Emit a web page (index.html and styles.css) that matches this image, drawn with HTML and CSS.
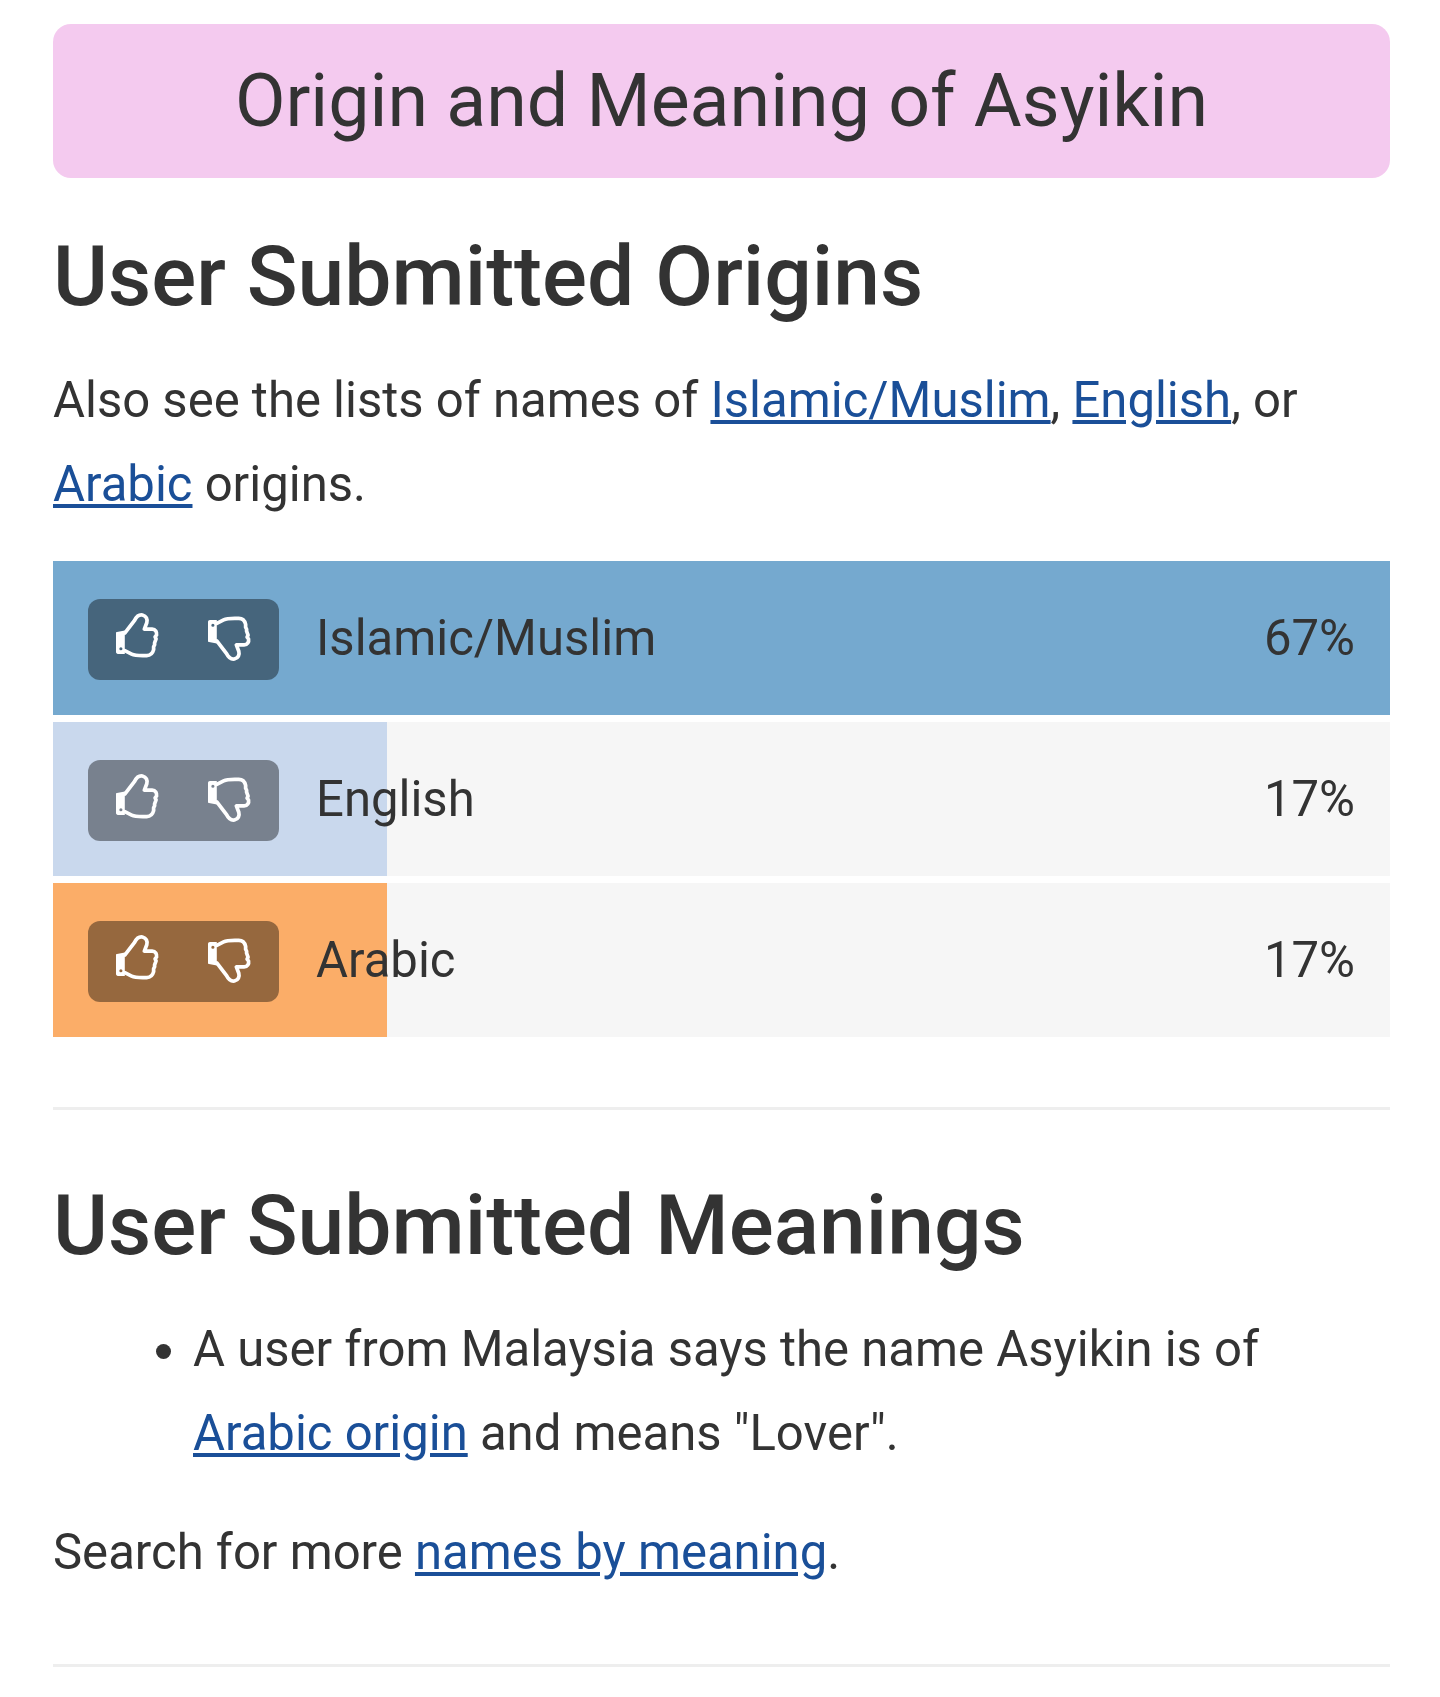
FILE: index.html
```html
<!DOCTYPE html>
<html lang="en">
<head>
    <meta charset="UTF-8">
    <meta name="viewport" content="width=device-width, initial-scale=1.0">
    <title>Origin and Meaning of Asyikin</title>
    <link rel="stylesheet" href="styles.css">
</head>
<body>
    <svg class="defs" width="0" height="0">
        <symbol id="thumb" viewBox="0 0 44 46">
            <path class="thumb-line" d="M9 21 L19 8 C21 4 24 2 27 2.5 C31 3.5 32.5 7 31.5 10.5 L29 17 H37 C40.5 17 42 20 41.5 23 L40 25 L41 27 L39.5 31 L39.5 33 L38.5 35 L38.5 38 C37.5 42 35 44 31.5 44 C26 44 20 44.5 16 42.5 L9 39"/>
            <path class="thumb-cuff" fill-rule="evenodd" d="M1 20 L9 18.5 V42.5 L2 42.5 C0.8 42.5 0 41.5 0 40.5 V21 C0 20.5 0.4 20 1 20 Z M5 35.5 A1.6 1.6 0 1 0 5 38.7 A1.6 1.6 0 1 0 5 35.5 Z"/>
        </symbol>
    </svg>

    <h1 class="title-box">Origin and Meaning of Asyikin</h1>

    <h2 class="heading-origins">User Submitted Origins</h2>
    <p>Also see the lists of names of <a href="#">Islamic/Muslim</a>, <a href="#">English</a>, or <a href="#">Arabic</a> origins.</p>

    <div class="votes">
        <div class="vote-row">
            <div class="vote-fill fill-blue" style="width: 100%"></div>
            <div class="vote-btns">
                <svg class="thumb"><use href="#thumb"/></svg>
                <svg class="thumb thumb-down"><use href="#thumb"/></svg>
            </div>
            <span class="vote-name">Islamic/Muslim</span>
            <span class="vote-pct">67%</span>
        </div>
        <div class="vote-row">
            <div class="vote-fill fill-light" style="width: 25%"></div>
            <div class="vote-btns">
                <svg class="thumb"><use href="#thumb"/></svg>
                <svg class="thumb thumb-down"><use href="#thumb"/></svg>
            </div>
            <span class="vote-name">English</span>
            <span class="vote-pct">17%</span>
        </div>
        <div class="vote-row">
            <div class="vote-fill fill-orange" style="width: 25%"></div>
            <div class="vote-btns">
                <svg class="thumb"><use href="#thumb"/></svg>
                <svg class="thumb thumb-down"><use href="#thumb"/></svg>
            </div>
            <span class="vote-name">Arabic</span>
            <span class="vote-pct">17%</span>
        </div>
    </div>

    <hr class="rule-first">

    <h2 class="heading-meanings">User Submitted Meanings</h2>
    <ul>
        <li>A user from Malaysia says the name Asyikin is of <a href="#">Arabic origin</a> and means "Lover".</li>
    </ul>
    <p class="search-more">Search for more <a href="#">names by meaning</a>.</p>

    <hr class="rule-last">
</body>
</html>
```

FILE: styles.css
```css
*{
    box-sizing: border-box;
}
body{
    margin: 0;
    padding: 24px 50px 0 53px;
    background: #fff;
    color: #333;
    font-family: Roboto, "Liberation Sans", sans-serif;
    font-size: 49.05px;
    line-height: 84px;
}
.defs{
    position: absolute;
}
a{
    color: #1a4f98;
}
.title-box{
    margin: 0;
    height: 154px;
    border-radius: 18px;
    background: #f4caef;
    font-size: 73.5px;
    font-weight: 400;
    line-height: 154px;
    text-align: center;
}
h2{
    margin: 0;
    font-size: 84px;
    font-weight: 500;
    line-height: 96px;
}
.heading-origins{
    margin-top: 51px;
}
.heading-meanings{
    margin-top: 68px;
}
h2 + p{
    margin-top: 33px;
}
p{
    margin: 0;
}
.votes{
    margin-top: 35px;
    display: flex;
    flex-direction: column;
    gap: 7px;
}
.vote-row{
    position: relative;
    height: 154px;
    background: #f6f6f6;
    padding: 0 35px 0 35px;
    display: flex;
    align-items: center;
}
.vote-fill{
    position: absolute;
    left: 0;
    top: 0;
    bottom: 0;
}
.fill-blue{
    background: #75a9cf;
}
.fill-light{
    background: #c9d8ed;
}
.fill-orange{
    background: #fbad68;
}
.vote-btns{
    position: relative;
    width: 191px;
    height: 81px;
    margin-top: 3px;
    border-radius: 12px;
    background: rgba(0, 0, 0, 0.4);
    padding: 13px 28px 0 28px;
    display: flex;
    justify-content: space-between;
    align-items: flex-start;
}
.thumb{
    width: 43px;
    height: 46px;
}
.thumb-down{
    transform: scaleY(-1);
    margin-top: 4px;
}
.thumb-line{
    fill: none;
    stroke: #fff;
    stroke-width: 3.8;
    stroke-linecap: round;
    stroke-linejoin: round;
}
.thumb-cuff{
    fill: #fff;
}
.vote-name{
    position: relative;
    margin-left: 37px;
    flex: 1;
}
.vote-pct{
    position: relative;
}
hr{
    margin: 0;
    border: 0;
    height: 3px;
    background: #eee;
}
.rule-first{
    margin-top: 70px;
}
ul{
    margin: 33px 0 0;
    padding-left: 140px;
}
.search-more{
    margin-top: 35px;
}
.rule-last{
    margin-top: 70px;
}
```
